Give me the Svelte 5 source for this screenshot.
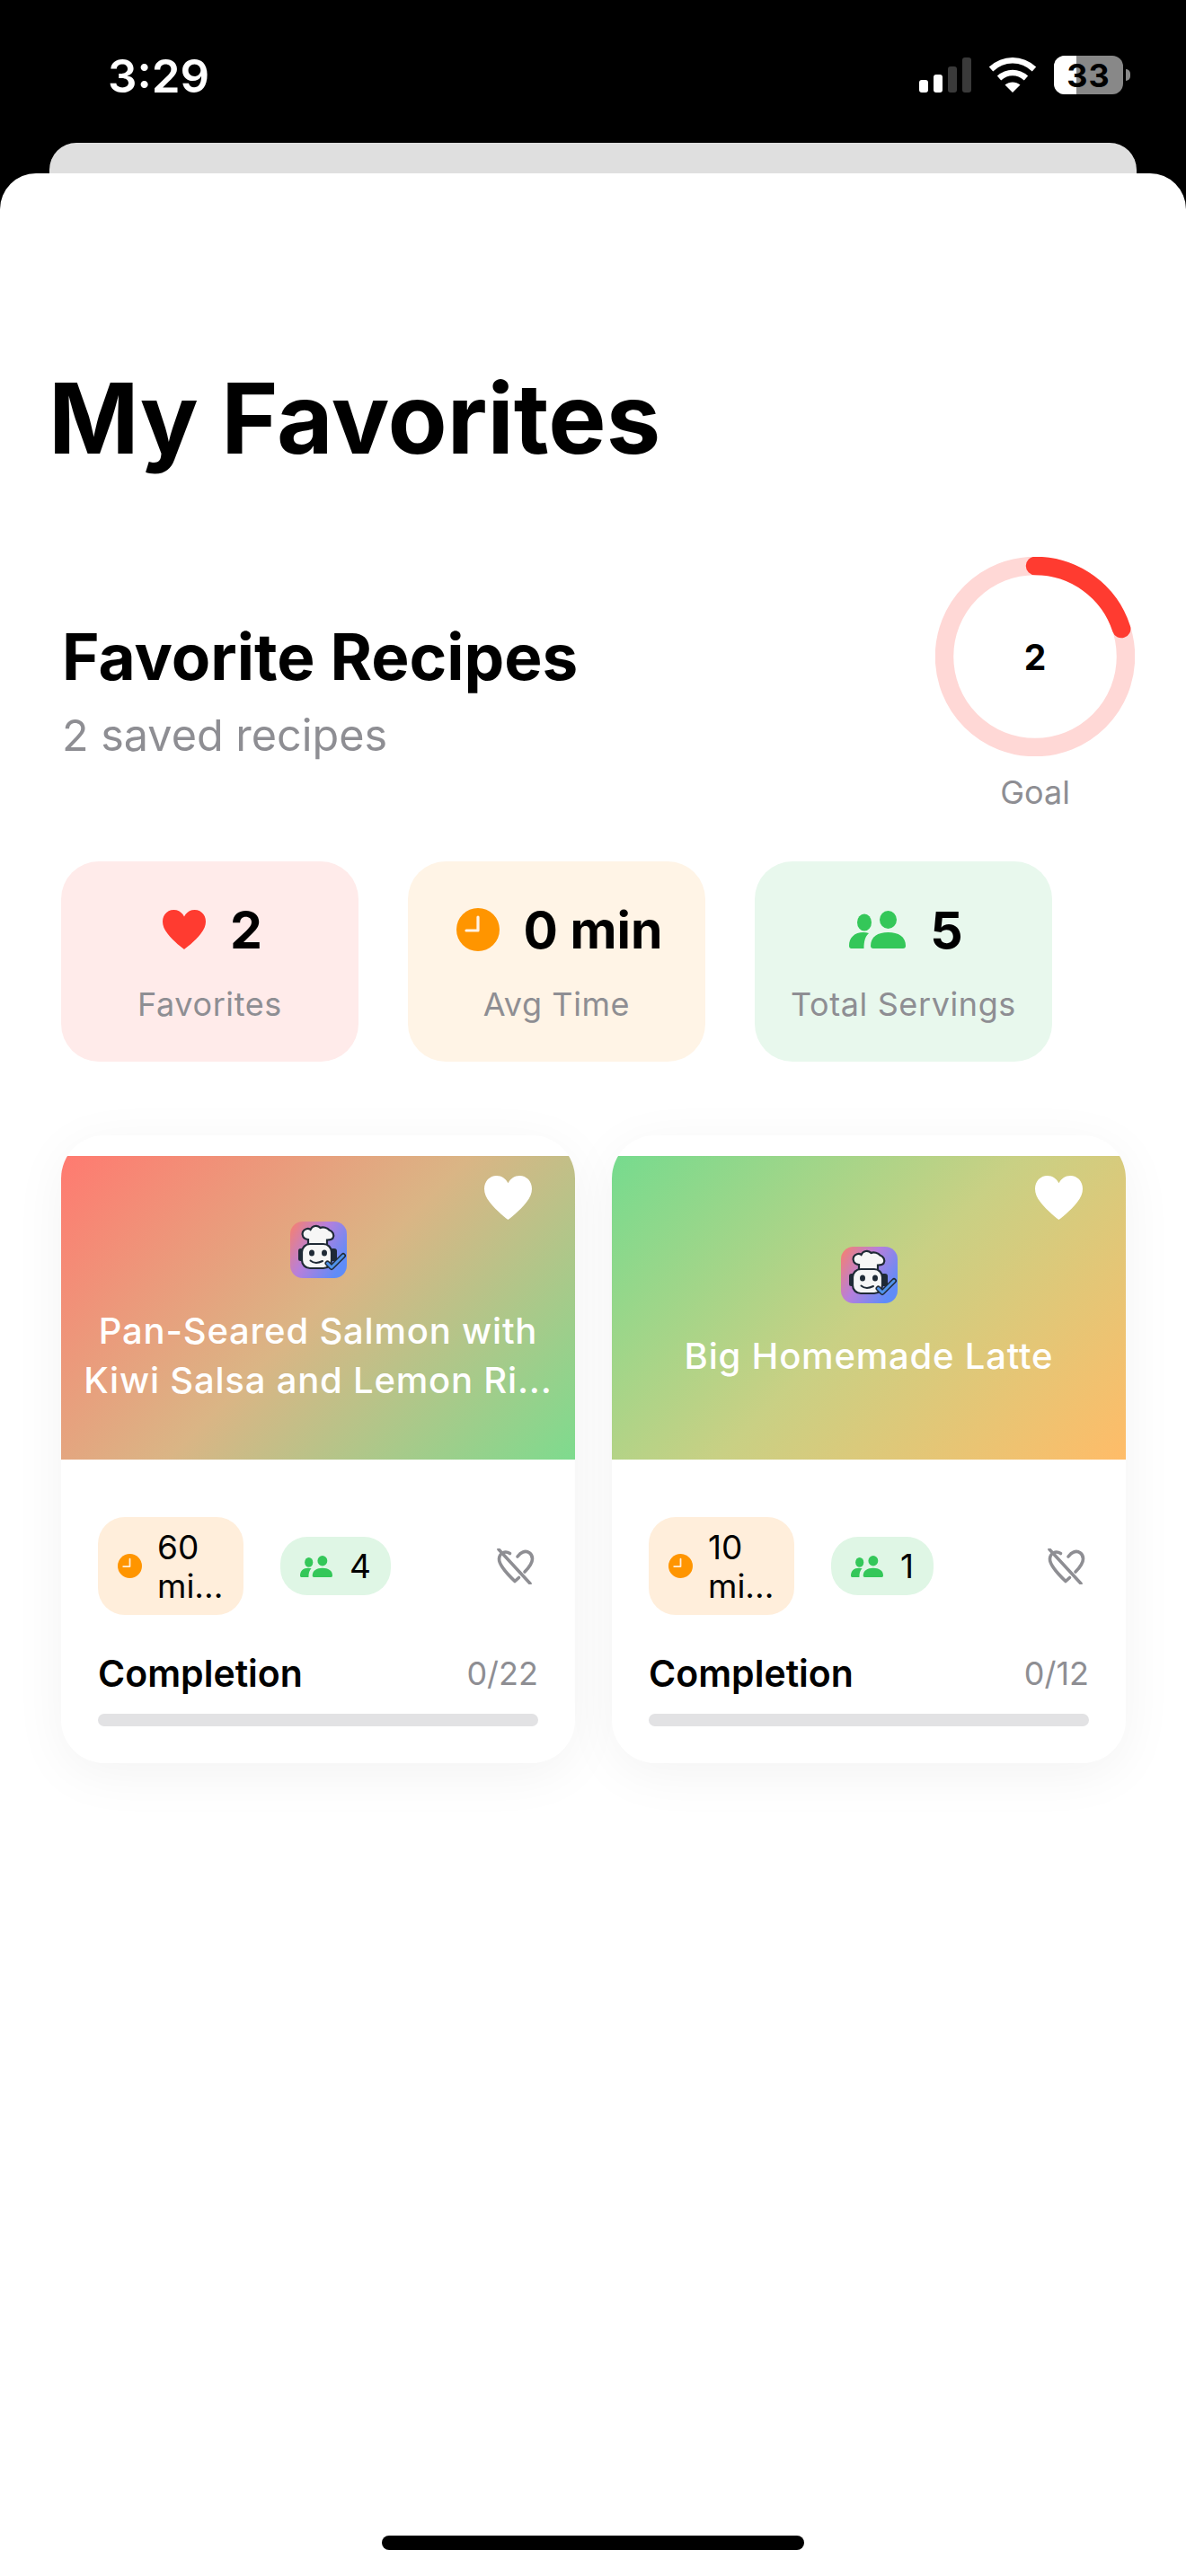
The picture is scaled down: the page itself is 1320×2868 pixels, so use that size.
<script>
  const stats = [
    { icon: "heart", value: "2", label: "Favorites", cls: "red" },
    { icon: "clock", value: "0 min", label: "Avg Time", cls: "orange" },
    { icon: "people", value: "5", label: "Total Servings", cls: "green" }
  ];
  const recipes = [
    { title: "Pan-Seared Salmon with Kiwi Salsa and Lemon Ri...", time: "60 mi...", servings: 4, total: 22, cls: "salmon" },
    { title: "Big Homemade Latte", time: "10 mi...", servings: 1, total: 12, cls: "latte" }
  ];
  const ringR = 101;
  const ringLen = 2 * Math.PI * ringR;
</script>

{#snippet heart(w, h, fill)}
  <svg width={w} height={h} viewBox="0 0 48 44" preserveAspectRatio="none">
    <path fill={fill} d="M24 44C22.8 43.2 12 35 5.5 26.5 1.8 21.7 0 17.6 0 13 0 5.5 5.4 0 12.4 0 17.6 0 21.6 2.8 24 7.4 26.4 2.8 30.4 0 35.6 0 42.6 0 48 5.5 48 13 48 17.6 46.2 21.7 42.5 26.5 36 35 25.2 43.2 24 44Z"/>
  </svg>
{/snippet}

{#snippet clock(size, hand)}
  <svg width={size} height={size} viewBox="0 0 48 48">
    <circle cx="24" cy="24" r="24" fill="#ff9500"/>
    <path d="M24 10V25H11" fill="none" stroke={hand} stroke-width="3.2" stroke-linecap="round" stroke-linejoin="round"/>
  </svg>
{/snippet}

{#snippet people(w, h)}
  <svg width={w} height={h} viewBox="0 0 63 42">
    <g fill="#34c759">
      <ellipse cx="17" cy="13" rx="8" ry="9.500"/>
      <ellipse cx="43.500" cy="10" rx="9.500" ry="10"/>
      <path d="M0 39C0 30 6 24 16 24 18 24 20 24.300 22 25 18 28.500 16.500 34 16.500 42H2.500C1 42 0 41 0 39Z"/>
      <path d="M24 39C24 29 32 24 43.500 24 55 24 63 29 63 39 63 41 62 42 60 42H27C25 42 24 41 24 39Z"/>
    </g>
  </svg>
{/snippet}

{#snippet chef(size)}
  <svg class="chef" width={size} height={size} viewBox="0 0 63 63">
    <defs>
      <linearGradient id="chefbg" x1="0" y1="0" x2="1" y2="0.6">
        <stop offset="0" stop-color="#f9806a"/>
        <stop offset="0.5" stop-color="#b67fdc"/>
        <stop offset="1" stop-color="#5f8cf8"/>
      </linearGradient>
    </defs>
    <rect width="63" height="63" rx="14" fill="url(#chefbg)"/>
    <rect x="9" y="30" width="6" height="14" rx="2.500" fill="#1f2a36"/>
    <rect x="44" y="30" width="8" height="14" rx="3" fill="#1f2a36"/>
    <path d="M20 27V20C14.500 20 12.500 15 14 11.500 15.500 8 20 7 22.500 9 24.500 4.500 30.500 3.500 33.500 7 36.500 5.500 41.500 7 43.500 9.500 47.500 11 49.500 15 47.500 18.500 46 20.500 43 20.500 41 20.500V27Z" fill="#f6f6f6" stroke="#1f2a36" stroke-width="2.200"/>
    <rect x="13" y="25" width="33" height="27" rx="9" fill="#f6f6f6" stroke="#1f2a36" stroke-width="2.200"/>
    <ellipse cx="24" cy="35" rx="3" ry="3.600" fill="#1f2a36"/>
    <ellipse cx="38" cy="35" rx="3" ry="3.600" fill="#1f2a36"/>
    <path d="M22.500 43.500C26 46.500 31 46.500 36 44" fill="none" stroke="#1f2a36" stroke-width="2" stroke-linecap="round"/>
    <path d="M41.500 46.500L46 51 59 38" fill="none" stroke="#1f2a36" stroke-width="6" stroke-linecap="round" stroke-linejoin="round"/>
    <path d="M41.500 46.500L46 51 59 38" fill="none" stroke="#4f92ea" stroke-width="3" stroke-linecap="round" stroke-linejoin="round"/>
  </svg>
{/snippet}

<div class="screen">
  <div class="statusbar">
    <span class="time">3:29</span>
    <div class="status-right">
      <div class="signal">
        <i class="b1"></i><i class="b2"></i><i class="b3"></i><i class="b4"></i>
      </div>
      <svg class="wifi" width="54" height="40" viewBox="0 0 54 40">
        <g fill="none" stroke="#fff" stroke-width="6.500">
          <path d="M3 14C17 1 37 1 51 14"/>
          <path d="M12 24C21 16 33 16 42 24"/>
        </g>
        <path d="M18.500 31.500C23.500 27.500 30.500 27.500 35.500 31.500L27 40Z" fill="#fff"/>
      </svg>
      <div class="battery">
        <div class="batt-body"><div class="batt-fill"></div><span>33</span></div>
        <div class="batt-tip"></div>
      </div>
    </div>
  </div>
  <div class="backsheet"></div>

  <div class="sheet">
    <h1>My Favorites</h1>

    <div class="header">
      <div class="header-text">
        <h2>Favorite Recipes</h2>
        <p>2 saved recipes</p>
      </div>
      <div class="goal">
        <div class="ring">
          <svg width="222" height="222" viewBox="0 0 222 222">
            <circle cx="111" cy="111" r={ringR} fill="none" stroke="#ffd8d6" stroke-width="20.500"/>
            <circle cx="111" cy="111" r={ringR} fill="none" stroke="#ff3b30" stroke-width="20.500" stroke-linecap="round"
              stroke-dasharray="{ringLen * 0.2} {ringLen}" transform="rotate(-90 111 111)"/>
          </svg>
          <span>2</span>
        </div>
        <div class="goal-label">Goal</div>
      </div>
    </div>

    <div class="stats">
      {#each stats as s}
        <div class="stat {s.cls}">
          <div class="stat-top">
            {#if s.icon == "heart"}
              {@render heart(48, 44, "#ff3b30")}
            {:else if s.icon == "clock"}
              {@render clock(48, "#fff3e6")}
            {:else}
              {@render people(63, 42)}
            {/if}
            <span>{s.value}</span>
          </div>
          <div class="stat-label">{s.label}</div>
        </div>
      {/each}
    </div>

    <div class="cards">
      {#each recipes as r}
        <div class="card">
          <div class="cover {r.cls}">
            <div class="cover-heart">{@render heart(53, 49, "#fff")}</div>
            {@render chef(63)}
            <div class="cover-title">{r.title}</div>
          </div>
          <div class="card-body">
            <div class="meta">
              <div class="pill pill-time">
                {@render clock(27, "#ffeedb")}
                <span class="time-text">{r.time}</span>
              </div>
              <div class="pill pill-serv">
                {@render people(36, 24)}
                <span>{r.servings}</span>
              </div>
              <svg class="unfav" width="42" height="40" viewBox="0 0 42 40">
                <path d="M14.500 5.500C9 2 3 5 2.500 11.500 2.200 17 7 24 20 36.500L24.500 32.500M31 26C36 21 39.500 16 39.500 11.500 39.500 5.500 34 2 29 4 26 5 24.500 7 23 9"
                  fill="none" stroke="#8e8e93" stroke-width="3.600" stroke-linecap="round" stroke-linejoin="round"/>
                <path d="M2 1L37 39" fill="none" stroke="#8e8e93" stroke-width="3.600" stroke-linecap="round"/>
              </svg>
            </div>
            <div class="completion">
              <span class="comp-label">Completion</span>
              <span class="comp-count">0/{r.total}</span>
            </div>
            <div class="bar"></div>
          </div>
        </div>
      {/each}
    </div>

    <div class="home"></div>
  </div>
</div>

<style>
  :global(body) {
    margin: 0;
    background: #000;
  }
  .screen {
    width: 1320px;
    height: 2868px;
    background: #000;
    display: flex;
    flex-direction: column;
    font-family: Inter, "Liberation Sans", sans-serif;
    color: #000;
    overflow: hidden;
  }
  .statusbar {
    height: 159px;
    flex: none;
    box-sizing: border-box;
    padding: 57px 62px 0 120px;
    display: flex;
    justify-content: space-between;
    align-items: flex-start;
  }
  .time {
    color: #fff;
    font-size: 51px;
    font-weight: 600;
    line-height: 56px;
  }
  .status-right {
    display: flex;
    align-items: flex-start;
    gap: 19px;
    padding-top: 5px;
  }
  .signal {
    display: flex;
    align-items: flex-end;
    gap: 6px;
    height: 39px;
    margin-top: 2px;
  }
  .signal i {
    display: block;
    width: 10px;
    border-radius: 3px;
    background: #fff;
  }
  .signal .b1 { height: 14px; }
  .signal .b2 { height: 20px; }
  .signal .b3 { height: 29px; background: #3a3a3a; }
  .signal .b4 { height: 39px; background: #3a3a3a; }
  .wifi {
    margin-top: 1px;
  }
  .battery {
    display: flex;
    align-items: center;
  }
  .batt-body {
    width: 77px;
    height: 43px;
    border-radius: 12px;
    background: #888;
    overflow: hidden;
    display: flex;
    align-items: center;
    justify-content: center;
    position: relative;
  }
  .batt-fill {
    position: absolute;
    left: 0;
    top: 0;
    bottom: 0;
    width: 25px;
    background: #fff;
  }
  .batt-body span {
    position: relative;
    font-size: 36px;
    font-weight: 700;
    color: #000;
    letter-spacing: 1px;
  }
  .batt-tip {
    width: 5px;
    height: 13px;
    margin-left: 3px;
    border-radius: 0 6px 6px 0;
    background: #888;
  }
  .backsheet {
    height: 34px;
    flex: none;
    margin: 0 55px;
    background: #dfdfdf;
    border-radius: 30px 30px 0 0;
  }
  .sheet {
    flex: 1;
    background: #fff;
    border-radius: 40px 40px 0 0;
    display: flex;
    flex-direction: column;
    min-height: 0;
  }
  h1 {
    margin: 212px 0 0 54px;
    font-size: 108px;
    line-height: 122px;
    font-weight: 700;
  }
  .header {
    margin-top: 93px;
    padding: 0 57px 0 69px;
    display: flex;
    justify-content: space-between;
    align-items: flex-start;
  }
  .header-text {
    padding-top: 68px;
  }
  h2 {
    margin: 0;
    font-size: 71px;
    line-height: 86px;
    font-weight: 700;
  }
  .header-text p {
    margin: 16px 0 0;
    font-size: 48.500px;
    line-height: 58px;
    color: #8e8e93;
  }
  .goal {
    width: 222px;
    text-align: center;
  }
  .ring {
    position: relative;
    width: 222px;
    height: 222px;
  }
  .ring svg {
    display: block;
  }
  .ring span {
    position: absolute;
    inset: 0;
    display: flex;
    align-items: center;
    justify-content: center;
    font-size: 39px;
    font-weight: 700;
  }
  .goal-label {
    margin-top: 18px;
    font-size: 36px;
    line-height: 44px;
    color: #8e8e93;
  }
  .stats {
    margin-top: 55px;
    padding-left: 68px;
    display: flex;
    gap: 55px;
  }
  .stat {
    width: 331px;
    height: 223px;
    flex: none;
    border-radius: 42px;
    box-sizing: border-box;
    padding-top: 46px;
    text-align: center;
  }
  .stat.red { background: #ffebea; }
  .stat.orange { background: #fff4e6; }
  .stat.green { background: #e8f8ed; }
  .stat-top {
    height: 60px;
    padding-left: 6px;
    display: flex;
    align-items: center;
    justify-content: center;
    gap: 27px;
    font-size: 57px;
    font-weight: 700;
  }
  .stat-label {
    margin-top: 31px;
    font-size: 36px;
    line-height: 44px;
    letter-spacing: 0.6px;
    color: #8e8e93;
  }
  .cards {
    margin-top: 82px;
    padding: 0 68px;
    display: flex;
    gap: 41px;
  }
  .card {
    width: 572px;
    flex: none;
    box-sizing: border-box;
    height: 699px;
    padding-top: 23px;
    background: #fff;
    border-radius: 48px;
    overflow: hidden;
    box-shadow: 0 12px 60px rgba(0, 0, 0, 0.05);
  }
  .cover {
    position: relative;
    height: 338px;
    box-sizing: border-box;
    padding: 12px 24px 0;
    display: flex;
    flex-direction: column;
    align-items: center;
    justify-content: center;
    gap: 31px;
  }
  .cover.salmon {
    background: linear-gradient(135deg, #ff7a70, #dab585 50%, #7edb8e);
  }
  .cover.latte {
    background: linear-gradient(135deg, #76db8e, #c9d084 50%, #ffbc68);
  }
  .cover-heart {
    position: absolute;
    top: 22px;
    right: 48px;
    line-height: 0;
  }
  .chef {
    flex: none;
  }
  .cover-title {
    color: #fff;
    font-size: 40px;
    line-height: 55px;
    font-weight: 500;
    letter-spacing: 0.8px;
    text-align: center;
  }
  .card-body {
    padding: 64px 41px 0;
  }
  .meta {
    display: flex;
    align-items: center;
    gap: 41px;
    height: 109px;
  }
  .pill {
    display: flex;
    align-items: center;
    box-sizing: border-box;
    font-size: 37px;
    line-height: 43px;
    border-radius: 30px;
  }
  .pill-time {
    width: 162px;
    height: 109px;
    padding: 0 22px;
    gap: 17px;
    background: #ffeedb;
  }
  .pill-time svg, .pill-serv svg {
    flex: none;
  }
  .time-text {
    width: 76px;
    flex: none;
  }
  .pill-serv {
    height: 65px;
    padding: 0 22px;
    gap: 19px;
    background: #dff6e5;
  }
  .unfav {
    margin-left: auto;
    margin-right: 4px;
  }
  .completion {
    margin-top: 41px;
    display: flex;
    justify-content: space-between;
    align-items: center;
    height: 48px;
  }
  .comp-label {
    font-size: 41px;
    font-weight: 600;
  }
  .comp-count {
    font-size: 36px;
    color: #8e8e93;
  }
  .bar {
    margin-top: 21px;
    height: 14px;
    border-radius: 7px;
    background: #e2e2e4;
  }
  .home {
    margin: auto auto 29px;
    width: 470px;
    height: 16px;
    border-radius: 8px;
    background: #000;
  }
</style>
